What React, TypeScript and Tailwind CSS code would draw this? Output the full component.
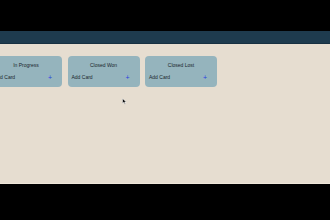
import React from "react";

const cols = ["In Progress", "Closed Won", "Closed Lost"];

export default function App() {
  return (
    <div className="w-[330px] h-[220px] bg-black flex flex-col overflow-hidden" style={{ fontFamily: '"Liberation Sans", Arial, sans-serif' }}>
      <div className="h-[31px] bg-black" />
      <div className="h-[13px] bg-[#1e3b4e] border-b border-[#173041]" />
      <div className="relative h-[140px] bg-[#e6ddd0] border-b border-[#efe6da] overflow-hidden">
        <div className="flex gap-[5.5px] -ml-[10px] mt-[12px]">
          {cols.map((c) => (
            <div key={c} className="w-[72px] h-[31px] shrink-0 rounded-[4px] bg-[#95b4bd] flex flex-col px-[4px]">
              <div className="text-[5px] leading-none text-center text-[#1a262c] mt-[7px]">{c}</div>
              <div className="flex items-center justify-between mt-[6px] pr-[6px]">
                <span className="text-[5px] leading-none text-[#1a262c]">Add Card</span>
                <span className="text-[7px] leading-none text-[#2b3ee0]">+</span>
              </div>
            </div>
          ))}
        </div>
        <svg className="absolute left-[122px] top-[54px]" width="5" height="7" viewBox="0 0 5 7">
          <path d="M0.5 0.5 L0.5 5.5 L1.8 4.3 L2.8 6.3 L3.5 6 L2.6 4 L4.3 4 Z" fill="#111" stroke="#fff" strokeWidth="0.5" />
        </svg>
      </div>
      <div className="flex-1 bg-black" />
    </div>
  );
}
